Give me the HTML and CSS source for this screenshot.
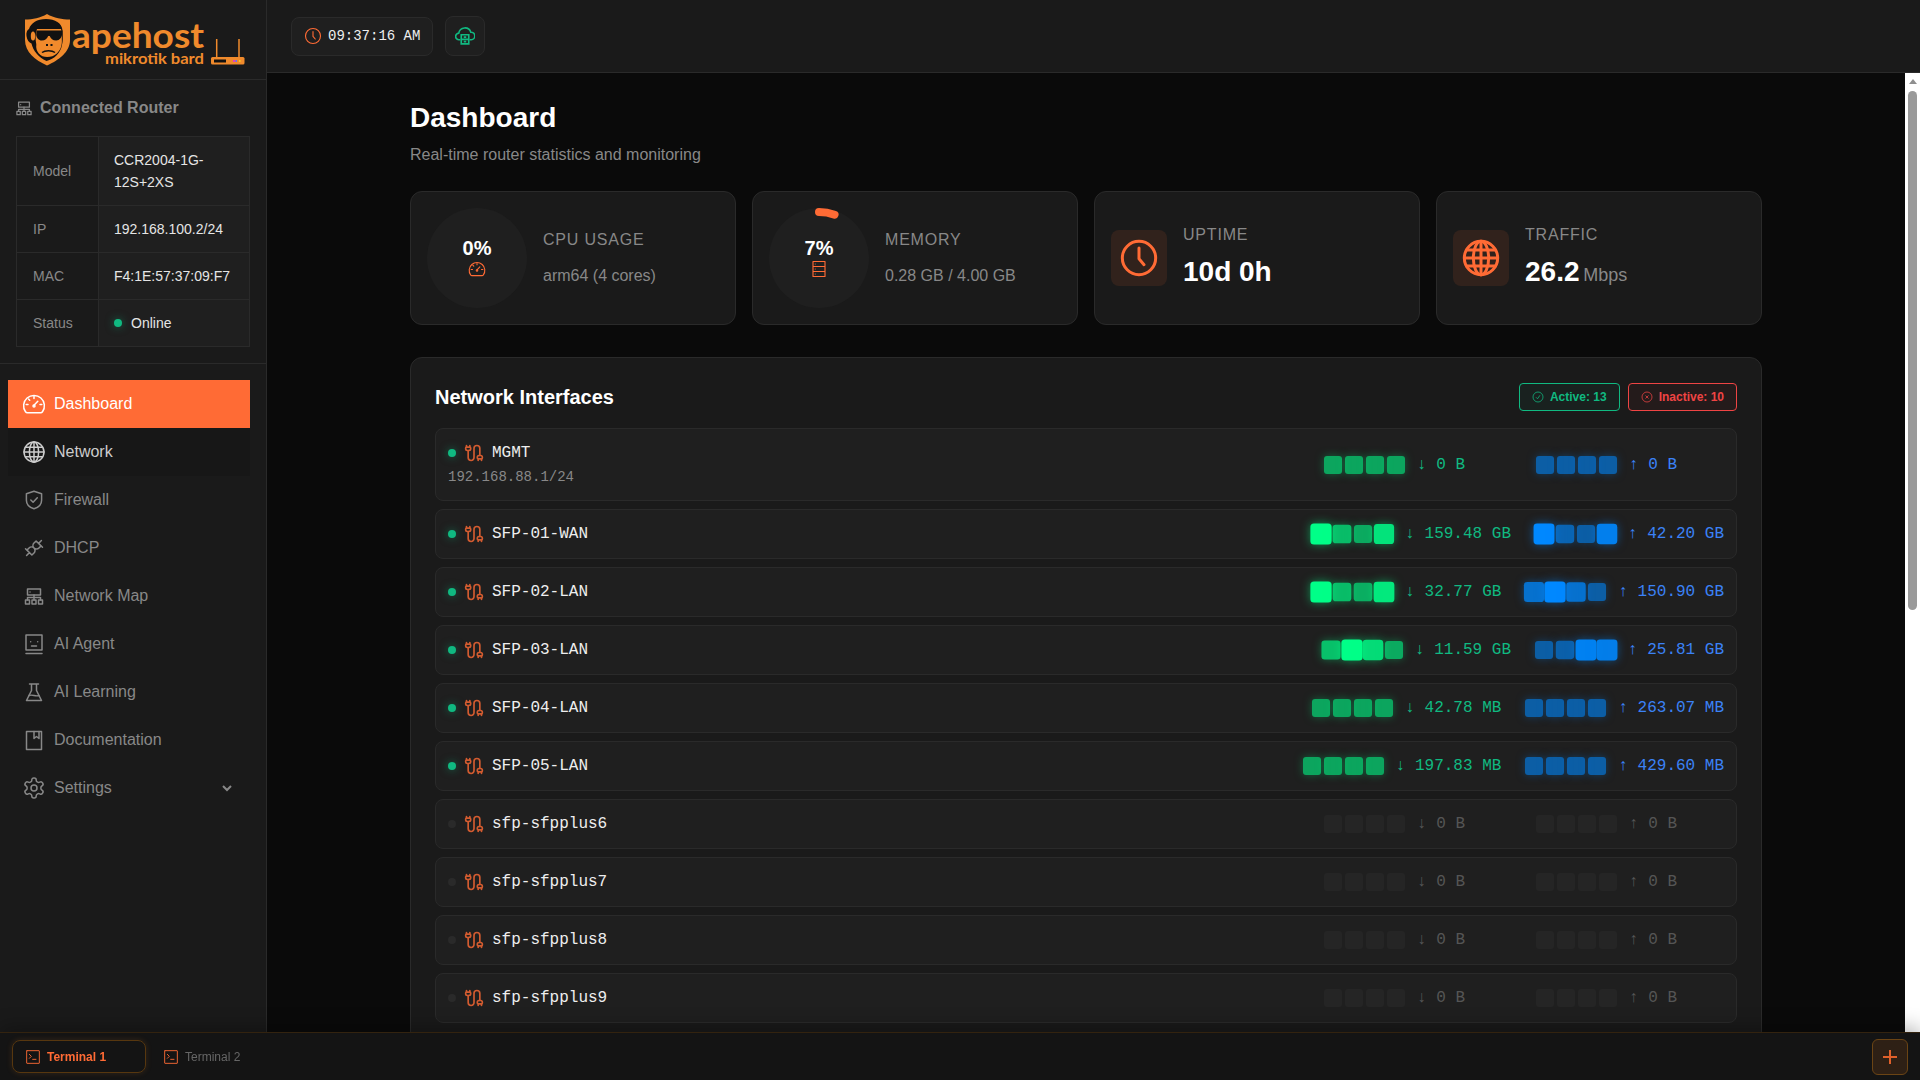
FILE: index.html
```html
<!DOCTYPE html>
<html>

<head>
  <meta charset="utf-8">
  <title>Apehost MikroTik Bard</title>
  <meta name="viewport" content="width=device-width, initial-scale=1.0">
  <link rel="stylesheet" href="styles.css">
</head>

<body>
  <svg class="icon-defs" aria-hidden="true">
    <symbol id="i-gauge" viewBox="0 0 24 24">
      <path d="M5.3 20.8h13.4c.8 0 1.3-.3 1.8-1a10.4 10.4 0 1 0-17 0c.5.7 1 1 1.8 1z" />
      <path d="M12 13.2l3.8-4M12 4.6v1.8M6.5 7l1.2 1.2M4.2 12.6H6M19.8 12.6H18" />
      <circle cx="12" cy="14" r="1" />
    </symbol>
    <symbol id="i-globe" viewBox="0 0 24 24">
      <circle cx="12" cy="12" r="10" />
      <ellipse cx="12" cy="12" rx="4.6" ry="10" />
      <path d="M12 2v20M2 12h20M3.4 7.2h17.2M3.4 16.8h17.2" />
    </symbol>
    <symbol id="i-shield" viewBox="0 0 24 24">
      <path d="M12 3.3l7.6 2.5v6.4c0 4.4-3.3 7.3-7.6 8.6-4.3-1.3-7.6-4.2-7.6-8.6V5.8z" />
      <path d="M8.8 12l2.3 2.3 4.2-4.6" />
    </symbol>
    <symbol id="i-plug" viewBox="0 0 24 24">
      <g transform="rotate(-45 12 12)">
        <path d="M5.5 8.5h3a3.5 3.5 0 0 1 0 7h-3zM18.500 8.500h-3a3.500 3.500 0 0 0 0 7h3zM1.500 12h4M18.500 12h4M12 12h0M5.500 6.500v2M18.500 15.500v2" />
      </g>
    </symbol>
    <symbol id="i-tree" viewBox="0 0 24 24">
      <rect x="5.500" y="5" width="13" height="6" />
      <path d="M12 11v5M5.500 16v-2.500h13V16M8 8h.01" />
      <rect x="3.500" y="16" width="4" height="4" />
      <rect x="10" y="16" width="4" height="4" />
      <rect x="16.500" y="16" width="4" height="4" />
    </symbol>
    <symbol id="i-agent" viewBox="0 0 24 24">
      <rect x="4" y="3" width="16" height="15" />
      <path d="M8.700 9.700v.01M15.700 9.700v.01M9.500 14h5M4 21.500h16" />
    </symbol>
    <symbol id="i-flask" viewBox="0 0 24 24">
      <path d="M7.500 4h9M9.500 4v6.500L4.500 20.500h15l-5-10V4" />
      <path d="M7 15.500c3-1.500 7 1.500 10 0" />
    </symbol>
    <symbol id="i-book" viewBox="0 0 24 24">
      <rect x="4.500" y="3.500" width="15" height="18" />
      <path d="M12 3.500v7l2.500-2 2.500 2v-7" />
    </symbol>
    <symbol id="i-gear" viewBox="0 0 24 24">
      <path d="M12.220 2h-.44a2 2 0 0 0-2 2v.18a2 2 0 0 1-1 1.730l-.43.25a2 2 0 0 1-2 0l-.15-.08a2 2 0 0 0-2.730.73l-.22.38a2 2 0 0 0 .73 2.730l.15.1a2 2 0 0 1 1 1.720v.51a2 2 0 0 1-1 1.740l-.15.09a2 2 0 0 0-.73 2.730l.22.38a2 2 0 0 0 2.730.73l.15-.08a2 2 0 0 1 2 0l.43.25a2 2 0 0 1 1 1.730V20a2 2 0 0 0 2 2h.44a2 2 0 0 0 2-2v-.18a2 2 0 0 1 1-1.730l.43-.25a2 2 0 0 1 2 0l.15.08a2 2 0 0 0 2.730-.73l.22-.39a2 2 0 0 0-.73-2.730l-.15-.08a2 2 0 0 1-1-1.740v-.5a2 2 0 0 1 1-1.740l.15-.09a2 2 0 0 0 .73-2.730l-.22-.38a2 2 0 0 0-2.730-.73l-.15.08a2 2 0 0 1-2 0l-.43-.25a2 2 0 0 1-1-1.730V4a2 2 0 0 0-2-2z" />
      <circle cx="12" cy="12" r="3" />
    </symbol>
    <symbol id="i-clock" viewBox="0 0 24 24">
      <circle cx="12" cy="12" r="10" />
      <path d="M12 6v6.500l3 3.500" />
    </symbol>
    <symbol id="i-rack" viewBox="0 0 24 24">
      <path d="M4 2h16v20H4zM4 8.700h16M4 15.300h16M7 5.300h.01M7 12h.01M7 18.700h.01" />
    </symbol>
    <symbol id="i-terminal" viewBox="0 0 24 24">
      <rect x="2.500" y="2.500" width="19" height="19" rx=".5" />
      <path d="M6.500 8l3 3-3 3M11.500 15.500h5" />
    </symbol>
    <symbol id="i-cable" viewBox="0 0 24 24">
      <path d="M17 21v-2a1 1 0 0 1-1-1v-1a2 2 0 0 1 2-2h2a2 2 0 0 1 2 2v1a1 1 0 0 1-1 1" />
      <path d="M19 15V6.500a1 1 0 0 0-7 0v11a1 1 0 0 1-7 0V9" />
      <path d="M21 21v-2h-4M3 5h4V3" />
      <path d="M7 5a1 1 0 0 1 1 1v1a2 2 0 0 1-2 2H4a2 2 0 0 1-2-2V6a1 1 0 0 1 1-1V3" />
    </symbol>
  </svg>

  <div class="app">
    <aside class="sidebar">
      <div class="logo">
        <svg width="266" height="79" viewBox="0 0 266 79">
          <path fill="#f08a2c" d="M47 14c-7 4-14 5.500-22 5.500V40c0 12 10 20 22 25.500C59 60 70 52 70 40V19.500C62 19.500 54 18 47 14z" />
          <path fill="#111" d="M46 19c-9 0-15 4-17 10-2 1-3 4-2.500 7 .5 4 2.500 6.500 5 7.500 1.500 7 7 14 15 17.500 8-2 14-8 15.500-16 .5-2 .8-4 .8-6 0-3 0-6-.3-8.500C62 23 55 19 46 19z" />
          <ellipse cx="33" cy="36" rx="2.200" ry="4.500" fill="#f08a2c" />
          <path fill="#f08a2c" d="M37 29h24c.8 3 1 7 .8 10 .5 6-1 11-5 14.500-2.500 2.500-6 3.500-9.500 3.500s-6.500-1-8.500-3.500c-2-2.500-3-5.500-2.500-9-1-5.500-1-11 .7-15.500z" />
          <path fill="#111" d="M36.500 30.500h26l-.3 3.500c-.4 3.500-2.500 6.500-6 6.500-3.500 0-5.500-2-6.500-4.500h-1.500c-1 2.500-3 4.500-6.500 4.500-3 0-5-2.500-5.500-5.500zM46 44h2v2h-2zM50.500 44h2v2h-2z" />
          <path fill="none" stroke="#111" stroke-width="1.500" d="M42 52.500c3-2.500 10-2.500 13 0" />
          <text class="logo-name" x="72" y="47.500" textLength="132" lengthAdjust="spacingAndGlyphs">apehost</text>
          <text class="logo-sub" x="105" y="64" textLength="99" lengthAdjust="spacingAndGlyphs">mikrotik bard</text>
          <path stroke="#f08a2c" stroke-width="1.500" d="M216.700 39v18M239 39v18" />
          <rect x="211" y="57" width="33.500" height="7.500" rx="1.500" fill="#f08a2c" />
          <rect x="214" y="59.500" width="12" height="3" fill="#111" />
          <rect x="233" y="60" width="2" height="2" fill="#e040c0" />
          <rect x="235.500" y="60" width="1.500" height="2" fill="#6a6aff" />
          <rect x="239" y="60" width="1.500" height="2" fill="#f5d020" />
        </svg>
      </div>

      <section class="router-info">
        <h3 class="router-title">
          <svg class="icon router-icon"><use href="#i-tree" /></svg>
          Connected Router
        </h3>
        <table class="router-table">
          <tr><td class="cell-key">Model</td><td class="cell-val">CCR2004-1G-12S+2XS</td></tr>
          <tr><td class="cell-key">IP</td><td class="cell-val">192.168.100.2/24</td></tr>
          <tr><td class="cell-key">MAC</td><td class="cell-val">F4:1E:57:37:09:F7</td></tr>
          <tr><td class="cell-key">Status</td><td class="cell-val"><span class="status-on"></span>Online</td></tr>
        </table>
      </section>

      <nav class="nav">
        <a class="nav-item active"><svg class="icon"><use href="#i-gauge" /></svg>Dashboard</a>
        <a class="nav-item hover"><svg class="icon"><use href="#i-globe" /></svg>Network</a>
        <a class="nav-item"><svg class="icon"><use href="#i-shield" /></svg>Firewall</a>
        <a class="nav-item"><svg class="icon"><use href="#i-plug" /></svg>DHCP</a>
        <a class="nav-item"><svg class="icon"><use href="#i-tree" /></svg>Network Map</a>
        <a class="nav-item"><svg class="icon"><use href="#i-agent" /></svg>AI Agent</a>
        <a class="nav-item"><svg class="icon"><use href="#i-flask" /></svg>AI Learning</a>
        <a class="nav-item"><svg class="icon"><use href="#i-book" /></svg>Documentation</a>
        <a class="nav-item"><svg class="icon"><use href="#i-gear" /></svg>Settings
          <svg class="chevron" viewBox="0 0 12 12"><path d="M2 4l4 4 4-4" /></svg>
        </a>
      </nav>
    </aside>

    <div class="content">
      <header class="topbar">
        <div class="clock">
          <svg class="icon clock-icon orange"><use href="#i-clock" /></svg>
          09:37:16 AM
        </div>
        <button class="cloud-btn">
          <svg width="20" height="20" viewBox="0 0 24 24">
            <path d="M6.500 16.500H5a4 4 0 0 1-.5-8A7.500 7.500 0 0 1 19 7.500a4.500 4.500 0 0 1 .5 9h-2" />
            <path d="M7.500 10.500h9v11h-9zM7.500 16h9M10.500 13.300h3M10.500 18.800h3" />
          </svg>
        </button>
      </header>

      <div class="main-row">
        <main class="main">
          <div class="page">
            <h1 class="page-title">Dashboard</h1>
            <p class="page-sub">Real-time router statistics and monitoring</p>

            <div class="stats">
              <div class="stat-card">
                <div class="ring">
                  <svg class="ring-bg" viewBox="0 0 100 100"><circle cx="50" cy="50" r="50" /></svg>
                  <div class="ring-text">0%</div>
                  <svg class="icon icon-20 orange"><use href="#i-gauge" /></svg>
                </div>
                <div class="stat-body">
                  <div class="stat-label">CPU Usage</div>
                  <div class="stat-detail">arm64 (4 cores)</div>
                </div>
              </div>
              <div class="stat-card">
                <div class="ring">
                  <svg class="ring-bg" viewBox="0 0 100 100">
                    <circle cx="50" cy="50" r="50" />
                    <circle class="ring-arc" cx="50" cy="50" r="46" pathLength="100" stroke-dasharray="5.500 94.500" transform="rotate(-90 50 50)" />
                  </svg>
                  <div class="ring-text">7%</div>
                  <svg class="icon icon-20 orange"><use href="#i-rack" /></svg>
                </div>
                <div class="stat-body">
                  <div class="stat-label">Memory</div>
                  <div class="stat-detail">0.28 GB / 4.00 GB</div>
                </div>
              </div>
              <div class="stat-card">
                <div class="stat-icon"><svg class="icon icon-40"><use href="#i-clock" /></svg></div>
                <div class="stat-body">
                  <div class="stat-label">Uptime</div>
                  <div class="stat-value">10d 0h</div>
                </div>
              </div>
              <div class="stat-card">
                <div class="stat-icon"><svg class="icon icon-40"><use href="#i-globe" /></svg></div>
                <div class="stat-body">
                  <div class="stat-label">Traffic</div>
                  <div class="stat-value">26.2 <span class="stat-unit">Mbps</span></div>
                </div>
              </div>
            </div>

            <section class="interfaces">
              <div class="interfaces-head">
                <h2 class="interfaces-title">Network Interfaces</h2>
                <div class="badges">
                  <span class="badge badge-on">
                    <svg class="badge-icon" viewBox="0 0 24 24"><circle cx="12" cy="12" r="10" /><path d="M8 12.500l3 3 5-7" /></svg>
                    Active: 13
                  </span>
                  <span class="badge badge-off">
                    <svg class="badge-icon" viewBox="0 0 24 24"><circle cx="12" cy="12" r="10" /><path d="M9 9l6 6M15 9l-6 6" /></svg>
                    Inactive: 10
                  </span>
                </div>
              </div>
              <div class="iface-list" id="ifaceList"></div>
            </section>
          </div>
        </main>
        <div class="scrollbar">
          <div class="scroll-arrow"></div>
          <div class="scroll-thumb"></div>
        </div>
      </div>
    </div>
  </div>

  <footer class="terminal-bar">
    <div class="term-tabs">
      <div class="term-tab active"><svg class="icon term-icon"><use href="#i-terminal" /></svg>Terminal 1</div>
      <div class="term-tab"><svg class="icon term-icon"><use href="#i-terminal" /></svg>Terminal 2</div>
    </div>
    <button class="term-add">
      <svg width="16" height="16" viewBox="0 0 16 16"><path d="M8 1v14M1 8h14" /></svg>
    </button>
  </footer>

  <script src="script.js"></script>
</body>

</html>
```

FILE: styles.css
```css
* {
  box-sizing: border-box;
}

html,
body {
  height: 100%;
}

body {
  margin: 0;
  background: #0a0a0a;
  color: #fff;
  font-family: "Liberation Sans", Arial, sans-serif;
  font-size: 16px;
  line-height: 1.5;
  overflow: hidden;
}

.icon-defs {
  display: none;
}

.icon {
  width: 24px;
  height: 24px;
  flex: none;
  fill: none;
  stroke: currentColor;
  stroke-width: 1.5;
  stroke-linecap: round;
  stroke-linejoin: round;
}

.icon-20 {
  width: 18px;
  height: 18px;
}

.icon-40 {
  width: 40px;
  height: 40px;
  stroke-width: 1.8;
}

.orange {
  color: #ff6b35;
}

.app {
  display: flex;
  height: 100vh;
}

/* sidebar */
.sidebar {
  width: 267px;
  flex: none;
  background: #1a1a1a;
  border-right: 1px solid #2a2a2a;
}

.logo {
  height: 80px;
  border-bottom: 1px solid #2a2a2a;
}

.logo svg {
  display: block;
}

.logo-name {
  font-family: "Lato", sans-serif;
  font-weight: 700;
  font-size: 35px;
  fill: #f08a2c;
}

.logo-sub {
  font-family: "Lato", sans-serif;
  font-weight: 700;
  font-size: 15px;
  fill: #f08a2c;
}

.router-info {
  padding: 16px;
  border-bottom: 1px solid #2a2a2a;
}

.router-title {
  display: flex;
  align-items: center;
  gap: 6px;
  margin: 0 0 16px;
  font-size: 16px;
  line-height: 24px;
  color: #888;
}

.router-icon {
  width: 20px;
  height: 20px;
  margin-left: -2px;
}

.router-table {
  width: 234px;
  border-collapse: collapse;
  table-layout: fixed;
  font-size: 14px;
  line-height: 22px;
}

.router-table td {
  padding: 12px 16px;
  border: 1px solid #2a2a2a;
}

.router-table .cell-key {
  width: 82px;
  color: #888;
  background: #1a1a1a;
}

.router-table .cell-val {
  padding-left: 15px;
  color: #e5e5e5;
  background: #1f1f1f;
}

.status-on {
  display: inline-block;
  width: 8px;
  height: 8px;
  margin-right: 9px;
  border-radius: 50%;
  background: #10b981;
  box-shadow: 0 0 8px rgba(16, 185, 129, 0.5);
  vertical-align: 1px;
}

.nav {
  padding: 16px 16px 16px 8px;
}

.nav-item {
  display: flex;
  align-items: center;
  gap: 8px;
  height: 48px;
  padding: 0 14px;
  color: #888;
  cursor: pointer;
}

.nav-item.active {
  background: #ff6b35;
  color: #fff;
}

.nav-item.hover {
  background: #171717;
  color: #ccc;
}

.chevron {
  width: 12px;
  height: 12px;
  margin-left: auto;
  margin-right: 3px;
  fill: none;
  stroke: #888;
  stroke-width: 2;
}

/* top bar */
.content {
  flex: 1;
  min-width: 0;
  display: flex;
  flex-direction: column;
}

.topbar {
  display: flex;
  align-items: center;
  gap: 12px;
  flex: none;
  height: 73px;
  padding: 0 24px;
  background: #1a1a1a;
  border-bottom: 1px solid #2a2a2a;
}

.clock {
  display: flex;
  align-items: center;
  gap: 6px;
  height: 39px;
  padding: 0 12px;
  background: #1f1f1f;
  border: 1px solid #2a2a2a;
  border-radius: 8px;
  font-family: "Liberation Mono", monospace;
  font-size: 14px;
  color: #eee;
}

.clock-icon {
  width: 18px;
  height: 18px;
}

.cloud-btn {
  display: flex;
  align-items: center;
  justify-content: center;
  width: 40px;
  height: 40px;
  padding: 0;
  background: #1f1f1f;
  border: 1px solid #2a2a2a;
  border-radius: 8px;
}

.cloud-btn svg {
  fill: none;
  stroke: #10b981;
  stroke-width: 2;
}

/* main */
.main-row {
  flex: 1;
  min-height: 0;
  display: flex;
}

.main {
  flex: 1;
  min-width: 0;
  overflow: hidden;
}

.scrollbar {
  display: flex;
  flex-direction: column;
  align-items: center;
  flex: none;
  width: 15px;
  padding-top: 6px;
  background: #fff;
}

.scroll-arrow {
  width: 0;
  height: 0;
  border-left: 4.5px solid transparent;
  border-right: 4.5px solid transparent;
  border-bottom: 5px solid #8f8f8f;
}

.scroll-thumb {
  width: 9px;
  height: 519px;
  margin-top: 7px;
  background: #9a9a9a;
  border-radius: 5px;
}

.page {
  max-width: 1400px;
  margin: 0 auto;
  padding: 24px;
}

.page-title {
  margin: 0;
  font-size: 28px;
  line-height: 42px;
  font-weight: 700;
}

.page-sub {
  margin: 4px 0 24px;
  color: #888;
}

.stats {
  display: grid;
  grid-template-columns: repeat(4, 1fr);
  gap: 16px;
  margin-bottom: 32px;
}

.stat-card {
  display: flex;
  align-items: center;
  gap: 16px;
  padding: 16px;
  background: #1a1a1a;
  border: 1px solid #2a2a2a;
  border-radius: 12px;
}

.ring {
  position: relative;
  display: flex;
  flex-direction: column;
  align-items: center;
  justify-content: center;
  width: 100px;
  height: 100px;
  padding-bottom: 2px;
  flex: none;
}

.ring-bg {
  position: absolute;
  inset: 0;
  overflow: visible;
}

.ring-bg circle {
  fill: #1f1f1f;
}

.ring-bg .ring-arc {
  fill: none;
  stroke: #ff6b35;
  stroke-width: 8;
  stroke-linecap: round;
}

.ring-text {
  position: relative;
  font-size: 20px;
  line-height: 24px;
  font-weight: 700;
}

.ring .icon {
  position: relative;
}

.stat-icon {
  display: flex;
  align-items: center;
  justify-content: center;
  width: 56px;
  height: 56px;
  flex: none;
  color: #ff6b35;
  background: rgba(255, 107, 53, 0.1);
  border-radius: 8px;
}

.stat-label {
  color: #888;
  text-transform: uppercase;
  letter-spacing: 0.05em;
}

.stat-detail {
  margin-top: 12px;
  color: #888;
}

.stat-value {
  margin-top: 4px;
  font-size: 28px;
  line-height: 42px;
  font-weight: 700;
}

.stat-unit {
  margin-left: -4px;
  font-size: 18px;
  line-height: 1;
  font-weight: 400;
  color: #888;
}

/* interfaces */
.interfaces {
  padding: 24px;
  background: #1a1a1a;
  border: 1px solid #2a2a2a;
  border-radius: 12px;
}

.interfaces-head {
  display: flex;
  align-items: center;
  justify-content: space-between;
  margin-bottom: 16px;
}

.interfaces-title {
  margin: 0;
  font-size: 20px;
  line-height: 30px;
  font-weight: 700;
}

.badges {
  display: flex;
  gap: 8px;
}

.badge {
  display: flex;
  align-items: center;
  gap: 6px;
  height: 28px;
  padding: 0 12px;
  border: 1px solid;
  border-radius: 4px;
  font-size: 12px;
  font-weight: 700;
}

.badge-on {
  color: #10b981;
  border-color: #10b981;
  background: rgba(16, 185, 129, 0.05);
}

.badge-off {
  color: #ef4444;
  border-color: #ef4444;
  background: rgba(239, 68, 68, 0.05);
}

.badge-icon {
  width: 12px;
  height: 12px;
  fill: none;
  stroke: currentColor;
  stroke-width: 1.5;
}

.iface-list {
  display: flex;
  flex-direction: column;
  gap: 8px;
}

.iface {
  display: flex;
  align-items: center;
  justify-content: space-between;
  padding: 12px;
  background: #1f1f1f;
  border: 1px solid #2a2a2a;
  border-radius: 8px;
  font-family: "Liberation Mono", monospace;
}

.iface-head {
  display: flex;
  align-items: center;
  gap: 8px;
}

.iface-dot {
  width: 8px;
  height: 8px;
  border-radius: 50%;
  background: #2a2a2a;
}

.iface.up .iface-dot {
  background: #10b981;
  box-shadow: 0 0 8px rgba(16, 185, 129, 0.5);
}

.iface-cable {
  width: 20px;
  height: 20px;
  fill: none;
  stroke: #ff6b35;
  stroke-width: 2;
  stroke-linecap: round;
  stroke-linejoin: round;
  opacity: 0.8;
}

.iface-name {
  color: #eee;
}

.iface-ip {
  margin-top: 2px;
  font-size: 14px;
  line-height: 21px;
  color: #888;
}

.iface-traffic {
  display: flex;
  gap: 24px;
}

.flow {
  display: flex;
  align-items: center;
  gap: 12px;
  color: #555;
}

.flow-num {
  min-width: 95px;
}

.bars {
  display: flex;
  gap: 3px;
}

.bar {
  width: 18px;
  height: 18px;
  border-radius: 3px;
  background: #2a2a2a;
  opacity: 0.6;
}

.iface.up .rx {
  color: #10b981;
}

.iface.up .tx {
  color: #3b82f6;
}

.iface.up .rx .bar {
  background: #00ff88;
  box-shadow: 0 0 8px rgba(0, 255, 136, 0.5);
}

.iface.up .tx .bar {
  background: #0088ff;
  box-shadow: 0 0 8px rgba(0, 136, 255, 0.5);
}

/* terminal bar */
.terminal-bar {
  position: fixed;
  left: 0;
  right: 0;
  bottom: 0;
  display: flex;
  align-items: center;
  justify-content: space-between;
  height: 48px;
  padding: 0 12px;
  background: #141414;
  border-top: 1px solid #33230f;
  box-shadow: 0 -4px 20px rgba(0, 0, 0, 0.3);
}

.term-tabs {
  display: flex;
  align-items: center;
  gap: 4px;
}

.term-tab {
  display: flex;
  align-items: center;
  gap: 6px;
  height: 33px;
  padding: 0 12px;
  border: 1px solid transparent;
  border-radius: 8px;
  font-size: 12px;
  color: #666;
}

.term-tab.active {
  width: 134px;
  color: #ff6b35;
  font-weight: 700;
  border-color: #57370f;
  box-shadow: 0 0 6px rgba(240, 138, 44, 0.15);
}

.term-icon {
  width: 16px;
  height: 16px;
  color: #ff6b35;
  opacity: 0.9;
}

.term-add {
  display: flex;
  align-items: center;
  justify-content: center;
  width: 36px;
  height: 36px;
  padding: 0;
  background: #2e2015;
  border: 1px solid #6b4414;
  border-radius: 6px;
}

.term-add svg {
  stroke: #e0602a;
  stroke-width: 2;
}
```

FILE: script.js
```js
// bars: [scale, opacity] for each of the 4 cells
var base = [[1, 0.6], [1, 0.6], [1, 0.6], [1, 0.6]];

var interfaces = [
  { name: "MGMT", ip: "192.168.88.1/24", up: true, rx: "0 B", tx: "0 B" },
  { name: "SFP-01-WAN", up: true, rx: "159.48 GB", tx: "42.20 GB",
    rxBars: [[1.18, 1], [1.04, 0.7], [1, 0.62], [1.12, 0.88]],
    txBars: [[1.16, 1], [1.02, 0.66], [1, 0.6], [1.14, 0.92]] },
  { name: "SFP-02-LAN", up: true, rx: "32.77 GB", tx: "150.90 GB",
    rxBars: [[1.18, 1], [1.03, 0.7], [1.03, 0.64], [1.15, 0.9]],
    txBars: [[1.12, 0.78], [1.18, 1], [1.08, 0.78], [1, 0.6]] },
  { name: "SFP-03-LAN", up: true, rx: "11.59 GB", tx: "25.81 GB",
    rxBars: [[1.06, 0.72], [1.18, 1], [1.14, 0.84], [1, 0.62]],
    txBars: [[1, 0.6], [1.02, 0.62], [1.16, 0.94], [1.16, 0.9]] },
  { name: "SFP-04-LAN", up: true, rx: "42.78 MB", tx: "263.07 MB" },
  { name: "SFP-05-LAN", up: true, rx: "197.83 MB", tx: "429.60 MB" },
  { name: "sfp-sfpplus6" }, { name: "sfp-sfpplus7" },
  { name: "sfp-sfpplus8" }, { name: "sfp-sfpplus9" }
];

function barsHtml(bars) {
  return (bars || base).map(function (b) {
    return '<div class="bar" style="transform:scale(' + b[0] + ');opacity:' + b[1] + '"></div>';
  }).join("");
}

function flowHtml(cls, arrow, label, bars) {
  return '<div class="flow ' + cls + '"><div class="bars">' + barsHtml(bars) + '</div>' +
    '<div class="flow-num">' + arrow + ' ' + (label || "0 B") + '</div></div>';
}

document.getElementById("ifaceList").innerHTML = interfaces.map(function (f) {
  return '<div class="iface' + (f.up ? " up" : "") + '"><div>' +
    '<div class="iface-head"><span class="iface-dot"></span>' +
    '<svg class="iface-cable"><use href="#i-cable" /></svg>' +
    '<span class="iface-name">' + f.name + '</span></div>' +
    (f.ip ? '<div class="iface-ip">' + f.ip + '</div>' : "") +
    '</div><div class="iface-traffic">' +
    flowHtml("rx", "↓", f.rx, f.rxBars) + flowHtml("tx", "↑", f.tx, f.txBars) +
    '</div></div>';
}).join("");
```
